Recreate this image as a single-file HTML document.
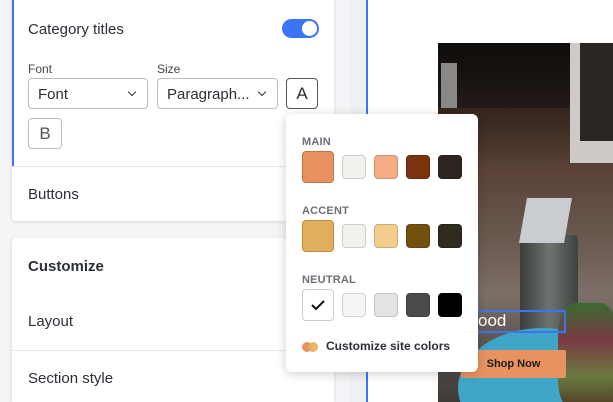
<!DOCTYPE html>
<html><head><meta charset="utf-8"><style>
*{box-sizing:border-box;margin:0;padding:0}
html,body{width:613px;height:402px;overflow:hidden}
body{position:relative;background:#fff;font-family:"Liberation Sans",sans-serif;color:#2b2f36}
.a{position:absolute}
.card{position:absolute;left:12px;width:322px;background:#fff;border-radius:4px;box-shadow:0 1px 4px rgba(0,0,0,.12);overflow:hidden}
.sel{position:absolute;height:31px;border:1px solid #b9bcc2;border-radius:4px;font-size:15px;padding:7px 9px;color:#2b2f36}
.chev{position:absolute;right:12px;top:10px;width:6px;height:6px;border-right:1.3px solid #333;border-bottom:1.3px solid #333;transform:rotate(45deg)}
.lbl{font-size:12px;color:#444}
.sw{position:absolute;border-radius:4px;border:1px solid rgba(0,0,0,.15)}
.big{width:32px;height:32px}
.sm{width:24px;height:24px}
.h{position:absolute;left:302px;font-size:11px;font-weight:bold;color:#6b6f76;letter-spacing:.2px}
</style></head><body>
<div class="a" style="left:0;top:0;width:350px;height:402px;background:#f4f5f7"></div>
<div class="a" style="left:350px;top:0;width:16px;height:402px;background:#eef0f3"></div>
<div class="a" style="left:366px;top:0;width:2px;height:402px;background:#3b74f5"></div>

<div class="card" style="top:-4px;height:225px">
  <div class="a" style="left:0;top:0;width:2px;height:170px;background:#3b74f5"></div>
  <div class="a" style="left:16px;top:25px;font-size:15px">Category titles</div>
  <div class="a" style="left:270px;top:23px;width:37px;height:19px;border-radius:10px;background:#3b74f5"></div>
  <div class="a" style="left:290px;top:25px;width:15px;height:15px;border-radius:50%;background:#fff"></div>
  <div class="a lbl" style="left:16px;top:66px">Font</div>
  <div class="a lbl" style="left:145px;top:66px">Size</div>
  <div class="sel" style="left:16px;top:82px;width:120px">Font<span class="chev"></span></div>
  <div class="sel" style="left:145px;top:82px;width:121px">Paragraph...<span class="chev"></span></div>
  <div class="sel" style="left:274px;top:82px;width:32px;padding:5px 0;text-align:center;font-size:17px;border-color:#555">A</div>
  <div class="sel" style="left:16px;top:122px;width:34px;padding:5px 0;text-align:center;font-size:17px;color:#555">B</div>
  <div class="a" style="left:0;top:170px;width:322px;height:1px;background:#e6e7ea"></div>
  <div class="a" style="left:16px;top:190px;font-size:15px">Buttons</div>
</div>

<div class="card" style="top:238px;height:164px;border-radius:4px 4px 0 0">
  <div class="a" style="left:16px;top:20px;font-size:15px;font-weight:bold">Customize</div>
  <div class="a" style="left:16px;top:75px;font-size:15px">Layout</div>
  <div class="a" style="left:0;top:112px;width:322px;height:1px;background:#e6e7ea"></div>
  <div class="a" style="left:16px;top:132px;font-size:15px">Section style</div>
</div>

<!-- photo -->
<div class="a" style="left:438px;top:43px;width:175px;height:359px;overflow:hidden;background:linear-gradient(180deg,#1a1614 0%,#3a2a22 22%,#5a4236 35%,#6a5a50 55%,#7d7068 70%,#5b534e 85%,#3d3a38 100%)">
  <div class="a" style="left:0;top:0;width:135px;height:65px;background:linear-gradient(180deg,#0e0c0b,#221a16)"></div>
  <div class="a" style="left:132px;top:0;width:43px;height:120px;background:#cfcac5"></div>
  <div class="a" style="left:142px;top:0;width:33px;height:98px;background:#2a2624"></div>
  <div class="a" style="left:3px;top:20px;width:16px;height:45px;background:#8a8886"></div>
  <div class="a" style="left:82px;top:192px;width:58px;height:100px;border-radius:4px;background:linear-gradient(90deg,#3a3c3a,#6f7470,#3f4240)"></div>
  <div class="a" style="left:85px;top:155px;width:45px;height:45px;background:#c9cdd2;transform:skewX(-10deg)"></div>
  <div class="a" style="left:20px;top:285px;width:170px;height:120px;border-radius:50%;background:#3fa6c7"></div>
  <div class="a" style="left:120px;top:260px;width:60px;height:110px;border-radius:30%;background:linear-gradient(180deg,#3a6b2f,#7a3a45,#6b7a40,#4a3020)"></div>
</div>
<div class="a" style="left:461px;top:310px;width:105px;height:23px;border:2px solid #3b74f5"></div>
<div class="a" style="left:478px;top:311px;font-size:17px;color:#fff">ood</div>
<div class="a" style="left:461px;top:350px;width:105px;height:28px;background:#e8935f;border-radius:2px;font-size:11px;font-weight:bold;text-align:center;line-height:28px;color:#1d1d1d">Shop Now</div>

<!-- popup -->
<div class="a" style="left:286px;top:114px;width:192px;height:258px;background:#fff;border-radius:6px;box-shadow:0 2px 10px rgba(0,0,0,.2)"></div>
<div class="h" style="top:136px">MAIN</div>
<div class="sw big" style="left:302px;top:151px;background:#e8935f;border-color:#c07448"></div>
<div class="sw sm" style="left:342px;top:155px;background:#f3f1ee"></div>
<div class="sw sm" style="left:374px;top:155px;background:#f5ad87"></div>
<div class="sw sm" style="left:406px;top:155px;background:#7a330e"></div>
<div class="sw sm" style="left:438px;top:155px;background:#2f2520"></div>
<div class="h" style="top:205px">ACCENT</div>
<div class="sw big" style="left:302px;top:220px;background:#e2b05d;border-color:#b88a3c"></div>
<div class="sw sm" style="left:342px;top:224px;background:#f3f1ee"></div>
<div class="sw sm" style="left:374px;top:224px;background:#f3cc8e"></div>
<div class="sw sm" style="left:406px;top:224px;background:#74500f"></div>
<div class="sw sm" style="left:438px;top:224px;background:#302a1f"></div>
<div class="h" style="top:274px">NEUTRAL</div>
<div class="sw big" style="left:302px;top:289px;background:#fff;border-color:#ccc"></div>
<svg class="a" style="left:310px;top:298px" width="16" height="14"><path d="M2 7 L6 11 L14 3" fill="none" stroke="#111" stroke-width="2"/></svg>
<div class="sw sm" style="left:342px;top:293px;background:#f5f5f5"></div>
<div class="sw sm" style="left:374px;top:293px;background:#e4e4e4"></div>
<div class="sw sm" style="left:406px;top:293px;background:#4a4a4a"></div>
<div class="sw sm" style="left:438px;top:293px;background:#000"></div>
<div class="a" style="left:302px;top:342px;width:10px;height:10px;border-radius:50%;background:#e8935f"></div>
<div class="a" style="left:308px;top:342px;width:10px;height:10px;border-radius:50%;background:#e2b05d;opacity:.9"></div>
<div class="a" style="left:326px;top:339px;font-size:12px;font-weight:bold;color:#2b2f36">Customize site colors</div>
</body></html>
